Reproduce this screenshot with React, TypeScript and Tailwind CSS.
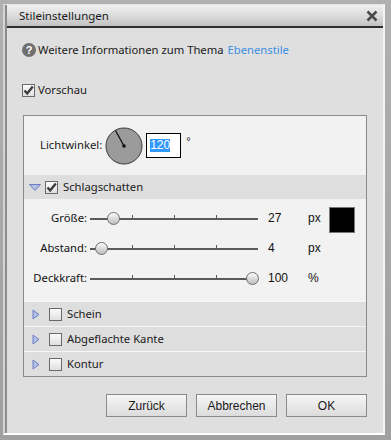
import React from "react";

const UI = { fontFamily: '"Noto Sans", "Open Sans", sans-serif' };
const ARIAL = { fontFamily: '"Liberation Sans", Arial, sans-serif' };

function CheckBox({ checked }: { checked?: boolean }) {
  return (
    <div className="w-[13px] h-[13px] border border-[#6a6a6a] bg-gradient-to-b from-[#fafafa] to-[#e0e0e0] flex items-center justify-center shrink-0">
      {checked && (
        <svg width="11" height="11" viewBox="0 0 11 11">
          <path d="M1.5 5.5 L4.2 8.5 L9.8 1.5" fill="none" stroke="#3c3c3c" strokeWidth="2.4" strokeLinejoin="miter" />
        </svg>
      )}
    </div>
  );
}

function TriRight() {
  return (
    <svg width="8" height="11" viewBox="0 0 8 11" className="shrink-0">
      <path d="M1 1 L7 5.5 L1 10 Z" fill="#b4bfe8" stroke="#6d7fc4" strokeWidth="1" />
    </svg>
  );
}

function TriDown() {
  return (
    <svg width="12" height="7" viewBox="0 0 12 7" className="shrink-0">
      <path d="M0.5 0.5 L11.5 0.5 L6 6.5 Z" fill="#b4bfe8" stroke="#6d7fc4" strokeWidth="1" />
    </svg>
  );
}

function Slider({ thumb }: { thumb: number }) {
  return (
    <div className="relative w-[168px] h-[14px] shrink-0">
      <div className="absolute left-0 right-0 top-[7px] h-[2px] bg-[#5a5a5a]" />
      <div className="absolute left-[42px] top-[4px] w-[1px] h-[3px] bg-[#5a5a5a]" />
      <div className="absolute left-[84px] top-[4px] w-[1px] h-[3px] bg-[#5a5a5a]" />
      <div className="absolute left-[126px] top-[4px] w-[1px] h-[3px] bg-[#5a5a5a]" />
      <div
        className="absolute top-[1px] w-[13px] h-[13px] rounded-full border border-[#707070] bg-gradient-to-b from-[#fbfbfb] to-[#bdbdbd]"
        style={{ left: thumb - 6 }}
      />
    </div>
  );
}

function SliderRow({ label, thumb, value, unit, swatch }: { label: string; thumb: number; value: string; unit: string; swatch?: boolean }) {
  return (
    <div className="h-[30px] flex items-center text-[12px] text-[#111]" style={ARIAL}>
      <div className="w-[63px] text-right text-[11.25px]" style={UI}>{label}</div>
      <div className="ml-[3px]">
        <Slider thumb={thumb} />
      </div>
      <div className="ml-[10px] w-[40px]">{value}</div>
      <div className="w-[21px]">{unit}</div>
      {swatch && <div className="w-[26px] h-[26px] bg-black border border-[#777] mt-[4px]" />}
    </div>
  );
}

function CollapsedRow({ label }: { label: string }) {
  return (
    <div className="h-[25px] border-t border-[#f6f6f6] bg-[#dedede] flex items-center pl-[8px] gap-[5px] text-[11.25px] text-[#1a1a1a]" style={UI}>
      <TriRight />
      <div className="ml-[4px]"><CheckBox /></div>
      <span>{label}</span>
    </div>
  );
}

function Btn({ label, w }: { label: string; w: number }) {
  return (
    <div
      className="h-[23px] border border-[#8a8a8a] bg-gradient-to-b from-[#f6f6f6] to-[#dcdcdc] flex items-center justify-center text-[12px] text-[#1a1a1a]"
      style={{ ...ARIAL, width: w }}
    >
      {label}
    </div>
  );
}

export default function App() {
  return (
    <div className="w-[391px] h-[440px] bg-gradient-to-b from-[#b0b0b0] to-[#a0a0a0] pt-[4px] pl-[3px] pr-[6px] pb-[5px] flex">
      <div className="flex-1 flex border-t border-t-[#e4e4e4] border-l-2 border-l-[#d4d4d4] border-r-2 border-r-[#f4f4f4] border-b-2 border-b-white">
        <div className="flex-1 flex flex-col border-l-2 border-l-[#8c8c8c] bg-[#dfdfdf]">
          {/* Title bar */}
          <div className="h-[23px] shrink-0 bg-gradient-to-b from-[#f0f0f0] via-[#dcdcdc] to-[#c2c2c2] border-b-2 border-b-[#2e2e2e] flex items-center justify-between pl-[12px] pr-[5px]">
            <span className="text-[11.5px] text-[#1a1a1a] leading-none" style={UI}>Stileinstellungen</span>
            <svg width="12" height="12" viewBox="0 0 12 12">
              <path d="M1.5 1.5 L10.5 10.5 M10.5 1.5 L1.5 10.5" stroke="#4a4a4a" strokeWidth="2.6" />
            </svg>
          </div>

          {/* Help row */}
          <div className="h-[20px] mt-[12px] flex items-center pl-[15px] text-[11.25px] text-[#1a1a1a]" style={UI}>
            <div className="w-[14px] h-[14px] rounded-full bg-[#707070] flex items-center justify-center text-white text-[11px] font-bold leading-none" style={ARIAL}>?</div>
            <span className="ml-[2px]">Weitere Informationen zum Thema</span>
            <span className="ml-[4px] text-[#3b8fe4]">Ebenenstile</span>
          </div>

          {/* Vorschau */}
          <div className="h-[20px] mt-[20px] flex items-center pl-[15px] text-[11.25px] text-[#1a1a1a]" style={UI}>
            <CheckBox checked />
            <span className="ml-[3px]">Vorschau</span>
          </div>

          {/* Panel */}
          <div className="mt-[15px] ml-[16px] w-[344px] border border-[#8a8a8a] bg-[#f2f2f2] flex flex-col">
            <div className="h-[59px] flex items-center pl-[16px] text-[11.25px] text-[#1a1a1a]" style={UI}>
              <span>Lichtwinkel:</span>
              <svg width="38" height="38" viewBox="0 0 38 38" className="ml-[3px]">
                <circle cx="19" cy="19" r="18" fill="#9b9b9b" stroke="#3a3a3a" strokeWidth="1" />
                <line x1="19" y1="19" x2="10.5" y2="3.5" stroke="#111" strokeWidth="1.3" />
                <circle cx="19" cy="19" r="1.8" fill="#111" />
              </svg>
              <div className="ml-[3px] w-[35px] h-[25px] border border-black bg-white flex items-center pl-[3px]">
                <span className="bg-[#3399ff] text-white text-[12px] leading-[13px] px-[0px]" style={ARIAL}>120</span>
              </div>
              <span className="ml-[5px] -mt-[8px] text-[11px]" style={ARIAL}>°</span>
            </div>

            <div className="h-[24px] bg-[#dedede] flex items-center pl-[5px] text-[11.25px] text-[#1a1a1a]" style={UI}>
              <TriDown />
              <div className="ml-[4px]"><CheckBox checked /></div>
              <span className="ml-[5px]">Schlagschatten</span>
            </div>

            <div className="pt-[4px] pb-[8px] pl-0">
              <SliderRow label="Größe:" thumb={23} value="27" unit="px" swatch />
              <SliderRow label="Abstand:" thumb={11} value="4" unit="px" />
              <SliderRow label="Deckkraft:" thumb={162} value="100" unit="%" />
            </div>

            <CollapsedRow label="Schein" />
            <CollapsedRow label="Abgeflachte Kante" />
            <CollapsedRow label="Kontur" />
          </div>

          {/* Buttons */}
          <div className="mt-[17px] ml-[16px] w-[344px] flex justify-end gap-[9px]">
            <Btn label="Zurück" w={81} />
            <Btn label="Abbrechen" w={81} />
            <Btn label="OK" w={81} />
          </div>
        </div>
      </div>
    </div>
  );
}
